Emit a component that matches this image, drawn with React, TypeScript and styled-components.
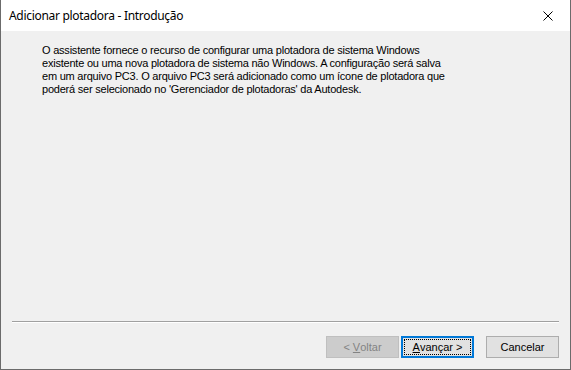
import React from 'react'
import styled, { createGlobalStyle } from 'styled-components'

const GlobalStyle = createGlobalStyle`
	html, body {
		margin: 0;
		padding: 0;
		background: #f0f0f0;
	}
`

const Window = styled.div`
	width: 571px;
	height: 370px;
	box-sizing: border-box;
	border: 1px solid #6b6b6b;
	border-top: none;
	display: flex;
	flex-direction: column;
	background: #f0f0f0;
	font-family: 'Liberation Sans', Arial, sans-serif;
`

const TitleBar = styled.div`
	height: 31px;
	flex: none;
	background: #ffffff;
	display: flex;
	align-items: center;
	justify-content: space-between;
	padding: 0 0 0 8px;
`

const Title = styled.span`
	font-family: 'Noto Sans', 'Open Sans', sans-serif;
	font-size: 12px;
	letter-spacing: -0.3px;
	color: #000000;
	margin-top: -1px;
`

const CloseButton = styled.div`
	width: 46px;
	height: 31px;
	display: flex;
	align-items: center;
	justify-content: center;
	margin-right: -1px;
`

const Body = styled.div`
	flex: 1;
	display: flex;
	flex-direction: column;
	padding: 13px 11px 0 11px;
`

const Intro = styled.p`
	margin: 0 0 0 30px;
	font-size: 11px;
	line-height: 13px;
	color: #000000;
	letter-spacing: -0.22px;
`

const Spacer = styled.div`
	flex: 1;
`

const Separator = styled.div`
	height: 1px;
	background: #a0a0a0;
	border-bottom: 1px solid #ffffff;
	margin-bottom: 13px;
`

const ButtonRow = styled.div`
	display: flex;
	justify-content: flex-end;
	margin-bottom: 11px;
`

const Button = styled.button<{ $primary?: boolean; $gap?: number }>`
	width: 73px;
	height: 22px;
	box-sizing: border-box;
	margin-left: ${(p) => p.$gap ?? 0}px;
	padding: 0;
	font-family: 'Liberation Sans', Arial, sans-serif;
	font-size: 11px;
	color: #000000;
	background: #e1e1e1;
	border: ${(p) => (p.$primary ? '2px solid #0078d7' : '1px solid #adadad')};
	position: relative;
	display: flex;
	align-items: center;
	justify-content: center;

	&:disabled {
		background: #cccccc;
		border-color: #bfbfbf;
		color: #838383;
	}

	u {
		text-decoration: underline;
		text-underline-offset: 1px;
	}
`

const FocusRing = styled.span`
	position: absolute;
	inset: 1px;
	border: 1px dotted #000000;
	pointer-events: none;
`

export default function App(): JSX.Element {
	return (
		<>
			<GlobalStyle />
			<Window>
				<TitleBar>
					<Title>Adicionar plotadora - Introdução</Title>
					<CloseButton>
						<svg width="10" height="10" viewBox="0 0 10 10">
							<path d="M0.5 0.5 L9.5 9.5 M9.5 0.5 L0.5 9.5" stroke="#000" strokeWidth="1" />
						</svg>
					</CloseButton>
				</TitleBar>
				<Body>
					<Intro>
						O assistente fornece o recurso de configurar uma plotadora de sistema Windows
						<br />
						existente ou uma nova plotadora de sistema não Windows. A configuração será salva
						<br />
						em um arquivo PC3. O arquivo PC3 será adicionado como um ícone de plotadora que
						<br />
						poderá ser selecionado no 'Gerenciador de plotadoras' da Autodesk.
					</Intro>
					<Spacer />
					<Separator />
					<ButtonRow>
						<Button disabled>
							&lt;&nbsp;<u>V</u>oltar
						</Button>
						<Button $primary $gap={2}>
							<u>A</u>vançar &gt;
							<FocusRing />
						</Button>
						<Button $gap={12}>Cancelar</Button>
					</ButtonRow>
				</Body>
			</Window>
		</>
	)
}
